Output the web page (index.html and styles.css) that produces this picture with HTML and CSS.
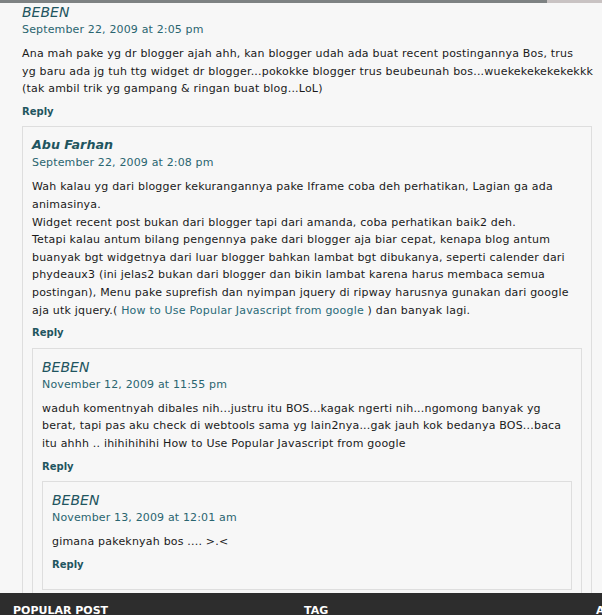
FILE: index.html
```html
<!DOCTYPE html>
<html>
<head>
<meta charset="utf-8">
<link rel="stylesheet" href="styles.css">
</head>
<body>
<div class="topbar"><div class="topbar-dark"></div><div class="topbar-light"></div></div>
<div class="page">
  <div class="thread">
    <div class="comment">
      <div class="name">BEBEN</div>
      <div class="date">September 22, 2009 at 2:05 pm</div>
      <p class="text">Ana mah pake yg dr blogger ajah ahh, kan blogger udah ada buat recent postingannya Bos, trus<br>yg baru ada jg tuh ttg widget dr blogger...pokokke blogger trus beubeunah bos...wuekekekekekekkk (tak ambil trik yg gampang &amp; ringan buat blog...LoL)</p>
      <div class="reply">Reply</div>
      <div class="box box-top">
        <div class="name name-link">Abu Farhan</div>
        <div class="date">September 22, 2009 at 2:08 pm</div>
        <p class="text">Wah kalau yg dari blogger kekurangannya pake Iframe coba deh perhatikan, Lagian ga ada animasinya.<br>Widget recent post bukan dari blogger tapi dari amanda, coba perhatikan baik2 deh.<br>Tetapi kalau antum bilang pengennya pake dari blogger aja biar cepat, kenapa blog antum buanyak bgt widgetnya dari luar blogger bahkan lambat bgt dibukanya, seperti calender dari phydeaux3 (ini jelas2 bukan dari blogger dan bikin lambat karena harus membaca semua postingan), Menu pake suprefish dan nyimpan jquery di ripway harusnya gunakan dari google aja utk jquery.( <a class="link" href="#">How to Use Popular Javascript from google</a> ) dan banyak lagi.</p>
        <div class="reply">Reply</div>
        <div class="box">
          <div class="name">BEBEN</div>
          <div class="date">November 12, 2009 at 11:55 pm</div>
          <p class="text">waduh komentnyah dibales nih...justru itu BOS...kagak ngerti nih...ngomong banyak yg berat, tapi pas aku check di webtools sama yg lain2nya...gak jauh kok bedanya BOS...baca itu ahhh .. ihihihihihi How to Use Popular Javascript from google</p>
          <div class="reply">Reply</div>
          <div class="box">
            <div class="name">BEBEN</div>
            <div class="date">November 13, 2009 at 12:01 am</div>
            <p class="text">gimana pakeknyah bos .... &gt;.&lt;</p>
            <div class="reply">Reply</div>
          </div>
        </div>
      </div>
    </div>
  </div>
</div>
<div class="footer">
  <div class="footer-col">POPULAR POST</div>
  <div class="footer-col">TAG</div>
  <div class="footer-col">ARCHIVE</div>
</div>
</body>
</html>
```
FILE: styles.css
```css
html, body {
  margin: 0;
  padding: 0;
}
body {
  background: #f7f7f7;
  font-family: "DejaVu Sans", Verdana, sans-serif;
  color: #1a1a1a;
  width: 602px;
  height: 615px;
  overflow: hidden;
}
.topbar {
  display: flex;
  height: 3px;
}
.topbar-dark {
  width: 547px;
  background: #7e8283;
}
.topbar-light {
  flex: 1;
  background: #c9c3c3;
}
.page {
  height: 590px;
  overflow: hidden;
}
.thread {
  padding: 0 0 0 22px;
}
.name {
  font-size: 14px;
  line-height: 18px;
  font-style: italic;
  color: #1f5560;
}
.name-link {
  font-weight: bold;
  font-size: 12.7px;
}
.date {
  font-size: 11px;
  line-height: 18px;
  letter-spacing: 0.15px;
  color: #2a6570;
}
.text {
  margin: 6px 0 0;
  font-size: 11px;
  line-height: 17.6px;
  letter-spacing: 0.2px;
}
.link {
  color: #2a6a78;
  text-decoration: none;
}
.reply {
  margin: 5px 0 6px;
  font-size: 10px;
  font-weight: bold;
  line-height: 17.6px;
  color: #1f5560;
}
.box {
  border: 1px solid #dedede;
  padding: 9px 9px 10px;
}
.box-top {
  margin-right: 10px;
}
.footer {
  background: #2d2d2d;
  height: 22px;
  padding-left: 13px;
  display: grid;
  grid-template-columns: 291px 292px 291px;
  overflow: hidden;
}
.footer-col {
  color: #ffffff;
  font-weight: bold;
  font-size: 11px;
  line-height: 12px;
  padding-top: 12px;
  white-space: nowrap;
}
```
